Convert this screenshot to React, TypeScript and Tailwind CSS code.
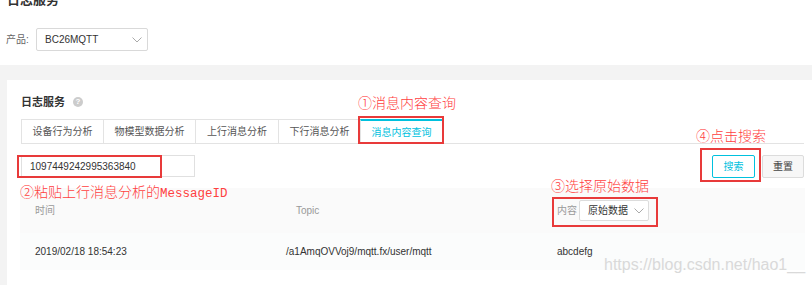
import React from "react";

const Chevron = ({ className = "" }: { className?: string }) => (
  <svg width="10" height="6" viewBox="0 0 10 6" className={className}>
    <polyline points="0.5,0.5 5,5 9.5,0.5" fill="none" stroke="#aaa" strokeWidth="1" />
  </svg>
);

const tabs = [
  { label: "设备行为分析", w: "w-[82px]" },
  { label: "物模型数据分析", w: "w-[92px]" },
  { label: "上行消息分析", w: "w-[83px]" },
  { label: "下行消息分析", w: "w-[82px]" },
  { label: "消息内容查询", w: "w-[83px]", active: true },
];

export default function App() {
  return (
    <div
      className="relative w-[812px] h-[285px] overflow-hidden bg-white text-[#333]"
      style={{ fontFamily: '"Liberation Sans", "Noto Sans CJK SC", sans-serif' }}
    >
      {/* page title */}
      <div className="-mt-[7px] pl-[7px] text-[13px] leading-[13px] font-bold text-[#333]">日志服务</div>

      {/* product row */}
      <div className="mt-[22px] flex items-center pl-[6px] h-[23px]">
        <span className="text-[10px] text-[#666] w-[30px]">产品:</span>
        <div className="flex items-center justify-between w-[112px] h-[23px] border border-[#d9d9d9] rounded-[2px] pl-[8px] pr-[5px]">
          <span className="text-[10px] text-[#333]">BC26MQTT</span>
          <Chevron />
        </div>
      </div>

      {/* gray area */}
      <div className="mt-[14px] bg-[#f3f3f3] pt-[15px] pl-[7px] h-[300px]">
        <div className="bg-white h-full pl-[14px] pr-[8px] pt-[14px]">
          {/* card title */}
          <div className="flex items-center h-[16px]">
            <span className="text-[11px] leading-[16px] font-bold text-[#333]">日志服务</span>
            <span className="ml-[8px] w-[10px] h-[10px] rounded-full bg-[#cccccc] text-white text-[8px] leading-[10px] text-center font-bold">?</span>
          </div>

          {/* tabs */}
          <div className="mt-[9px] flex items-start border-b border-[#e3e3e3]">
            {tabs.map((t, i) => (
              <div
                key={t.label}
                className={
                  t.active
                    ? `${t.w} h-[25px] -mb-px bg-white border-t-2 border-t-[#00c1de] border-l border-r border-l-[#e3e3e3] border-r-[#e3e3e3] flex items-center justify-center text-[10px] text-[#00c1de]`
                    : `${t.w} h-[24px] border-t border-l border-[#e3e3e3] flex items-center justify-center text-[10px] text-[#555]` +
                      (i === tabs.length - 1 ? " border-r" : "")
                }
              >
                {t.label}
              </div>
            ))}
          </div>

          {/* search row */}
          <div className="mt-[11px] flex items-start justify-between">
            <div className="w-[174px] h-[22px] border border-[#e0e0e0] flex items-center pl-[8px] text-[10px] text-[#333]">
              1097449242995363840
            </div>
            <div className="flex items-start gap-[7px]">
              <div className="w-[43px] h-[23px] border border-[#00c1de] rounded-[2px] bg-white flex items-center justify-center text-[10px] text-[#00c1de]">
                搜索
              </div>
              <div className="w-[42px] h-[23px] border border-[#dcdcdc] rounded-[2px] bg-[#f7f7f7] flex items-center justify-center text-[10px] text-[#444]">
                重置
              </div>
            </div>
          </div>

          {/* table */}
          <div className="mt-[10px] -ml-px mr-[-1px]">
            <div className="h-[45px] bg-[#fafafa] grid grid-cols-[251px_271px_1fr] items-center pl-[15px] text-[10px] text-[#999]">
              <span>时间</span>
              <span className="pl-[10px]">Topic</span>
              <div className="flex items-center">
                <span className="w-[22px]">内容</span>
                <div className="flex items-center justify-between w-[70px] h-[21px] border border-[#dcdcdc] rounded-[2px] bg-white pl-[8px] pr-[4px]">
                  <span className="text-[10px] text-[#333]">原始数据</span>
                  <Chevron />
                </div>
              </div>
            </div>
            <div className="h-[37px] bg-[#fbfcfc] grid grid-cols-[251px_271px_1fr] items-center pl-[15px] text-[10px] text-[#333]">
              <span>2019/02/18 18:54:23</span>
              <span>/a1AmqOVVoj9/mqtt.fx/user/mqtt</span>
              <span>abcdefg</span>
            </div>
          </div>
        </div>
      </div>

      {/* annotation overlays */}
      <div className="absolute left-[358px] top-[96px] text-[14px] leading-[14px] font-light text-[#ff4040] whitespace-nowrap">①消息内容查询</div>
      <div className="absolute left-[358px] top-[116px] w-[86px] h-[28px] border-2 border-[#e83a3a]" />

      <div className="absolute left-[17px] top-[155px] w-[145px] h-[23px] border-2 border-[#e83a3a]" />
      <div className="absolute left-[20px] top-[185px] text-[14px] leading-[14px] font-light text-[#ff4040] whitespace-nowrap">
        ②粘贴上行消息分析的
        <span className="text-[12.5px]" style={{ fontFamily: '"Liberation Mono", monospace' }}>MessageID</span>
      </div>

      <div className="absolute left-[551px] top-[179px] text-[14px] leading-[14px] font-light text-[#ff4040] whitespace-nowrap">③选择原始数据</div>
      <div className="absolute left-[552px] top-[197px] w-[106px] h-[30px] border-2 border-[#e83a3a]" />

      <div className="absolute left-[696px] top-[129px] text-[14px] leading-[14px] font-light text-[#ff4040] whitespace-nowrap">④点击搜索</div>
      <div className="absolute left-[700px] top-[148px] w-[61px] h-[34px] border-2 border-[#e83a3a]" />

      {/* watermark */}
      <div className="absolute left-[604px] top-[257px] text-[16px] leading-[16px] text-[#d9d9d9] whitespace-nowrap">
        https://blog.csdn.net/hao1__
      </div>
    </div>
  );
}
